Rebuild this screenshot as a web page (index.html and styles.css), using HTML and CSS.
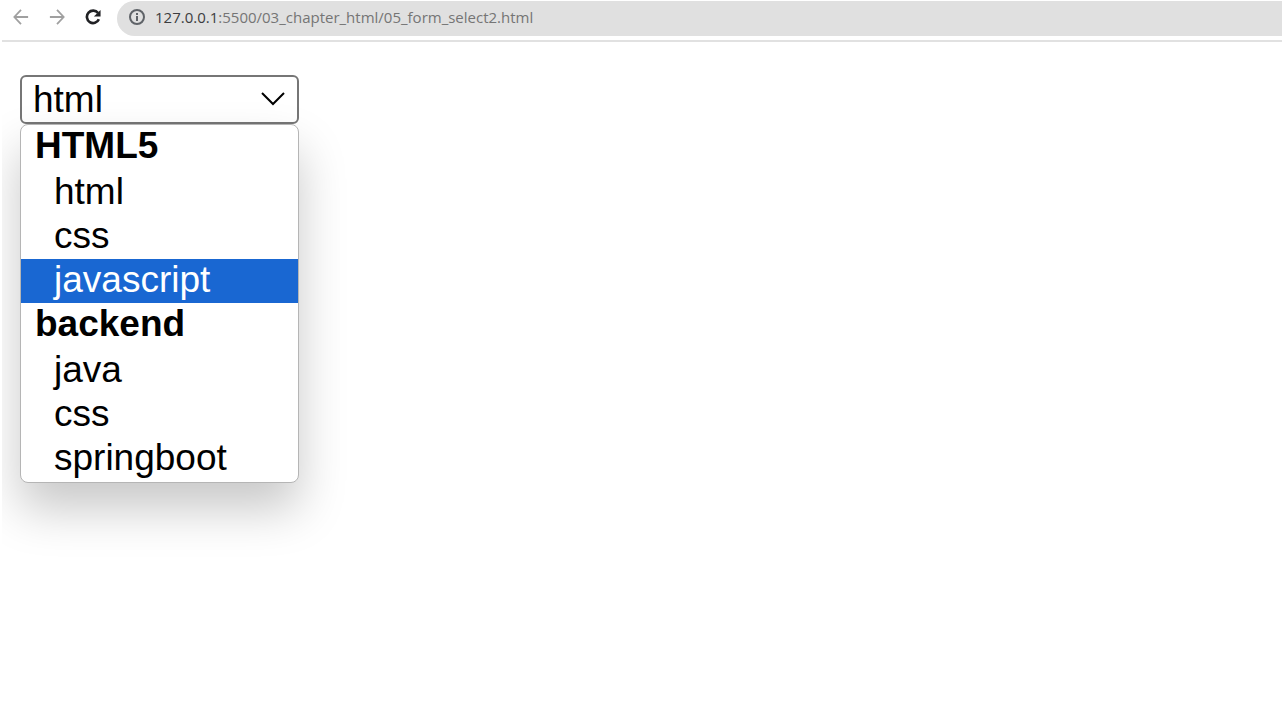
FILE: index.html
```html
<!DOCTYPE html>
<html lang="en">
<head>
<meta charset="utf-8">
<title>Form select</title>
<link rel="stylesheet" href="styles.css">
</head>
<body>
<header class="toolbar">
  <nav class="nav">
    <button class="nav-button muted" type="button" aria-label="Back"><svg viewBox="0 0 18 18"><path d="M17 9H2M9 1L1.500 9 9 17"/></svg></button>
    <button class="nav-button muted" type="button" aria-label="Forward"><svg viewBox="0 0 18 18"><path d="M1 9h15M9 1l7.500 8L9 17"/></svg></button>
    <button class="nav-button reload" type="button" aria-label="Reload"><svg viewBox="0 0 18 18"><path d="M14.700 4.500A7 7 0 1 0 15.600 11.500"/><path class="solid" d="M17.500 1v7.500H10z"/></svg></button>
  </nav>
  <div class="address">
    <svg class="info" viewBox="0 0 16 16" aria-hidden="true"><circle cx="8" cy="8" r="7"/><path d="M8 7v5M8 4v2"/></svg>
    <a class="url" href="#"><span class="host">127.0.0.1</span>:5500/03_chapter_html/05_form_select2.html</a>
  </div>
</header>
<main class="page">
  <div class="picker">
    <select class="select" aria-label="Language">
      <optgroup label="HTML5"><option selected>html</option><option>css</option><option>javascript</option></optgroup>
      <optgroup label="backend"><option>java</option><option>css</option><option>springboot</option></optgroup>
    </select>
    <svg class="chevron" viewBox="0 0 24 14" aria-hidden="true"><path d="M1 1l11 11L23 1"/></svg>
    <ul class="menu" role="listbox" aria-label="Language options">
      <li class="group" role="presentation">HTML5</li>
      <li class="option" role="option">html</li>
      <li class="option" role="option">css</li>
      <li class="option active" role="option" aria-selected="true">javascript</li>
      <li class="group" role="presentation">backend</li>
      <li class="option" role="option">java</li>
      <li class="option" role="option">css</li>
      <li class="option" role="option">springboot</li>
    </ul>
  </div>
</main>
</body>
</html>
```
FILE: styles.css
```css
* { box-sizing: border-box; }
body {
  margin: 0;
  min-height: 100vh;
  display: flex;
  flex-direction: column;
  background: #fff;
  color: #000;
  font-family: "Liberation Sans", Arial, sans-serif;
}
.toolbar {
  display: flex;
  gap: 16px;
  margin-left: 2px;
  padding: 1px 0 4px 11px;
  border-bottom: 2px solid #e1e1e1;
}
.nav { display: flex; align-items: center; gap: 20px; padding-bottom: 3px; }
.nav-button {
  display: flex;
  padding: 0;
  border: 0;
  background: none;
  color: #202124;
}
.nav-button svg { width: 16px; height: 16px; fill: none; stroke: currentColor; stroke-width: 2; }
.nav-button.reload svg { stroke-width: 3; }
.nav-button .solid { fill: currentColor; stroke: none; }
.muted { color: #a0a0a0; }
.address {
  flex: 1;
  height: 35px;
  display: flex;
  align-items: center;
  gap: 10px;
  padding: 0 0 3px 12px;
  border-radius: 18px 0 0 18px;
  background: #e0e0e0;
}
.info { width: 16px; height: 16px; fill: none; stroke: #5f6368; stroke-width: 2; }
.url {
  color: #757575;
  font: 15px/20px "Open Sans", "Noto Sans", sans-serif;
  text-decoration: none;
}
.host { color: #3c3d40; }
.page { flex: 1; margin-left: 2px; padding: 33px 18px; overflow: hidden; }
.picker { position: relative; width: 279px; font-size: 37px; }
.select {
  display: block;
  width: 100%;
  height: 49px;
  padding: 0 11px;
  border: 2px solid #767676;
  border-radius: 6px;
  appearance: none;
  background: #fff;
  color: #000;
  font: inherit;
}
.chevron {
  position: absolute;
  top: 17px;
  right: 14px;
  width: 24px;
  height: 14px;
  fill: none;
  stroke: #000;
  stroke-width: 2;
  pointer-events: none;
}
.menu {
  position: absolute;
  top: 100%;
  left: 0;
  width: 100%;
  margin: 0;
  padding: 0 0 1px;
  list-style: none;
  border: 1px solid #b5b5b5;
  border-radius: 8px;
  background: #fff;
  box-shadow: 0 26px 48px rgba(0, 0, 0, 0.22);
}
.group { padding: 0 14px 4px; line-height: 42px; font-weight: bold; }
.option { padding: 0 14px 2px 33px; line-height: 42px; }
.active { background: #1967d2; color: #fff; }
```
